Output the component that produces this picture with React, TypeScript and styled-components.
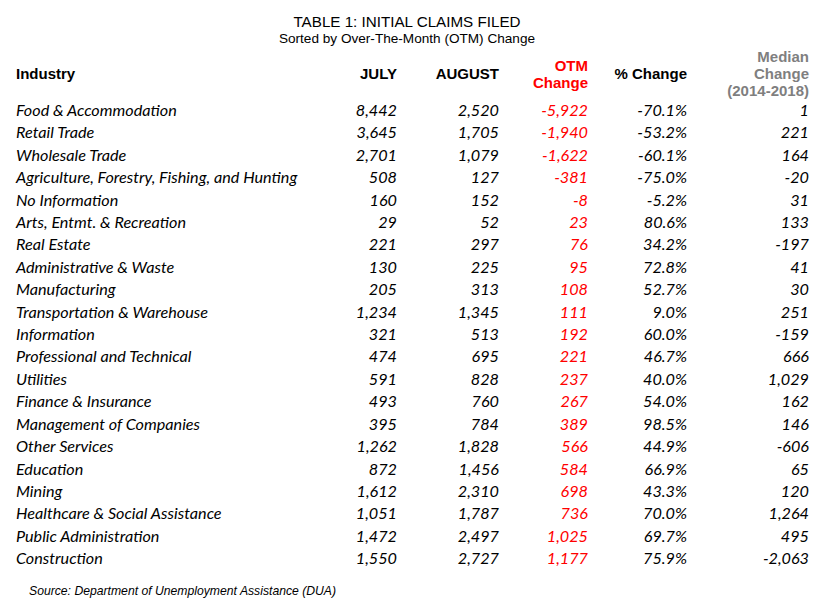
import styled, { createGlobalStyle } from 'styled-components';

const COLORS = {
  TEXT: '#000000',
  RED: '#ff0000',
  GREY: '#7f7f7f',
};

interface RowData {
  industry: string;
  july: string;
  august: string;
  otm: string;
  pct: string;
  median: string;
}

const ROWS: RowData[] = [
  { industry: 'Food & Accommodation', july: '8,442', august: '2,520', otm: '-5,922', pct: '-70.1%', median: '1' },
  { industry: 'Retail Trade', july: '3,645', august: '1,705', otm: '-1,940', pct: '-53.2%', median: '221' },
  { industry: 'Wholesale Trade', july: '2,701', august: '1,079', otm: '-1,622', pct: '-60.1%', median: '164' },
  { industry: 'Agriculture, Forestry, Fishing, and Hunting', july: '508', august: '127', otm: '-381', pct: '-75.0%', median: '-20' },
  { industry: 'No Information', july: '160', august: '152', otm: '-8', pct: '-5.2%', median: '31' },
  { industry: 'Arts, Entmt. & Recreation', july: '29', august: '52', otm: '23', pct: '80.6%', median: '133' },
  { industry: 'Real Estate', july: '221', august: '297', otm: '76', pct: '34.2%', median: '-197' },
  { industry: 'Administrative & Waste', july: '130', august: '225', otm: '95', pct: '72.8%', median: '41' },
  { industry: 'Manufacturing', july: '205', august: '313', otm: '108', pct: '52.7%', median: '30' },
  { industry: 'Transportation & Warehouse', july: '1,234', august: '1,345', otm: '111', pct: '9.0%', median: '251' },
  { industry: 'Information', july: '321', august: '513', otm: '192', pct: '60.0%', median: '-159' },
  { industry: 'Professional and Technical', july: '474', august: '695', otm: '221', pct: '46.7%', median: '666' },
  { industry: 'Utilities', july: '591', august: '828', otm: '237', pct: '40.0%', median: '1,029' },
  { industry: 'Finance & Insurance', july: '493', august: '760', otm: '267', pct: '54.0%', median: '162' },
  { industry: 'Management of Companies', july: '395', august: '784', otm: '389', pct: '98.5%', median: '146' },
  { industry: 'Other Services', july: '1,262', august: '1,828', otm: '566', pct: '44.9%', median: '-606' },
  { industry: 'Education', july: '872', august: '1,456', otm: '584', pct: '66.9%', median: '65' },
  { industry: 'Mining', july: '1,612', august: '2,310', otm: '698', pct: '43.3%', median: '120' },
  { industry: 'Healthcare & Social Assistance', july: '1,051', august: '1,787', otm: '736', pct: '70.0%', median: '1,264' },
  { industry: 'Public Administration', july: '1,472', august: '2,497', otm: '1,025', pct: '69.7%', median: '495' },
  { industry: 'Construction', july: '1,550', august: '2,727', otm: '1,177', pct: '75.9%', median: '-2,063' },
];

const GlobalStyle = createGlobalStyle`
  html, body {
    margin: 0;
    padding: 0;
    background: #ffffff;
  }
`;

export default function App(): JSX.Element {
  return (
    <Page>
      <GlobalStyle />
      <TitleBlock>
        <Title>TABLE 1: INITIAL CLAIMS FILED</Title>
        <Subtitle>Sorted by Over-The-Month (OTM) Change</Subtitle>
      </TitleBlock>
      <Table>
        <HeadCell $align='left'>Industry</HeadCell>
        <HeadCell>JULY</HeadCell>
        <HeadCell>AUGUST</HeadCell>
        <HeadCell $color={COLORS.RED}>
          OTM
          <br />
          Change
        </HeadCell>
        <HeadCell>% Change</HeadCell>
        <HeadCell $color={COLORS.GREY}>
          Median
          <br />
          Change
          <br />
          (2014-2018)
        </HeadCell>
        {ROWS.map((row) => (
          <Row key={row.industry}>
            <Cell $align='left'>{row.industry}</Cell>
            <Cell>{row.july}</Cell>
            <Cell>{row.august}</Cell>
            <Cell $color={COLORS.RED}>{row.otm}</Cell>
            <Cell>{row.pct}</Cell>
            <Cell>{row.median}</Cell>
          </Row>
        ))}
      </Table>
      <Source>Source: Department of Unemployment Assistance (DUA)</Source>
    </Page>
  );
}

const Page = styled.div`
  width: 840px;
  height: 614px;
  box-sizing: border-box;
  padding-top: 13px;
  background: #ffffff;
  color: ${COLORS.TEXT};
`;

const TitleBlock = styled.div`
  display: flex;
  flex-direction: column;
  align-items: center;
  padding-left: 134px;
  width: 546px;
  font-family: 'Liberation Sans', Arial, sans-serif;
`;

const Title = styled.div`
  font-size: 15.2px;
  line-height: 17px;
`;

const Subtitle = styled.div`
  font-size: 13.6px;
  line-height: 17px;
`;

const Table = styled.div`
  display: grid;
  grid-template-columns: 300px 81px 102px 89px 99px 122px;
  padding-left: 16px;
  margin-top: 1px;
`;

const Row = styled.div`
  display: contents;
`;

const HeadCell = styled.div<{ $align?: 'left' | 'right'; $color?: string }>`
  display: flex;
  align-items: center;
  justify-content: ${(p) => (p.$align === 'left' ? 'flex-start' : 'flex-end')};
  text-align: ${(p) => p.$align ?? 'right'};
  height: 51px;
  font-family: 'Liberation Sans', Arial, sans-serif;
  font-weight: bold;
  font-size: 15px;
  line-height: 17px;
  color: ${(p) => p.$color ?? COLORS.TEXT};
`;

const Cell = styled.div<{ $align?: 'left' | 'right'; $color?: string }>`
  text-align: ${(p) => p.$align ?? 'right'};
  font-family: Lato, 'Open Sans', sans-serif;
  font-style: italic;
  font-size: 16.2px;
  line-height: 22.4px;
  white-space: nowrap;
  color: ${(p) => p.$color ?? COLORS.TEXT};
`;

const Source = styled.div`
  margin-top: 13px;
  padding-left: 29px;
  font-family: 'Liberation Sans', Arial, sans-serif;
  font-style: italic;
  font-size: 12.2px;
  line-height: 17px;
`;
